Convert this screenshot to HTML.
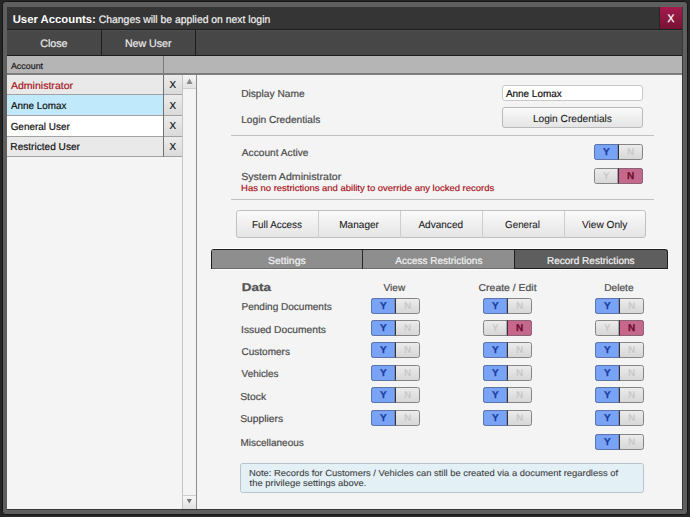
<!DOCTYPE html>
<html><head><meta charset="utf-8"><style>
html,body{margin:0;padding:0;width:690px;height:517px;overflow:hidden;background:#262626}
svg{display:block}
text{font-family:"Liberation Sans",sans-serif;text-rendering:geometricPrecision}
</style></head><body>
<svg width="690" height="517" viewBox="0 0 690 517">
<defs>
<linearGradient id="gClose" x1="0" y1="0" x2="0" y2="1"><stop offset="0" stop-color="#a51b4d"/><stop offset="1" stop-color="#761232"/></linearGradient>
<linearGradient id="gBtn" x1="0" y1="0" x2="0" y2="1"><stop offset="0" stop-color="#fbfbfb"/><stop offset="1" stop-color="#e4e4e4"/></linearGradient>
<linearGradient id="gX" x1="0" y1="0" x2="0" y2="1"><stop offset="0" stop-color="#ececec"/><stop offset="1" stop-color="#dadada"/></linearGradient>
<linearGradient id="gOff" x1="0" y1="0" x2="0" y2="1"><stop offset="0" stop-color="#ececec"/><stop offset="1" stop-color="#d6d6d6"/></linearGradient>
<linearGradient id="gScr" x1="0" y1="0" x2="0" y2="1"><stop offset="0" stop-color="#f6f6f6"/><stop offset="1" stop-color="#e2e2e2"/></linearGradient>
<clipPath id="cFrame"><rect x="7" y="7" width="675" height="502"/></clipPath>
</defs>
<rect x="0" y="0" width="690" height="517" fill="#262626" />
<rect x="2.5" y="1.5" width="685" height="513" fill="#5f5f5f" stroke="#151515" stroke-width="1" rx="3" />
<rect x="7" y="7" width="675" height="502" fill="#f4f4f4" />
<rect x="7" y="7" width="675" height="22" fill="#353535" />
<rect x="659" y="7" width="1" height="22" fill="#262626"/>
<rect x="660" y="7" width="22" height="22" fill="url(#gClose)" />
<text x="667.4" y="22" font-size="10.8" fill="#ffffff" textLength="6.8" lengthAdjust="spacingAndGlyphs" stroke="#ffffff" stroke-width="0.3">X</text>
<rect x="7" y="29" width="675" height="1" fill="#1d1d1d"/>
<rect x="7" y="30" width="675" height="25" fill="#474747" />
<rect x="7" y="30" width="675" height="1" fill="#505050"/>
<rect x="7" y="55" width="675" height="1" fill="#1d1d1d"/>
<rect x="101" y="30" width="1" height="25" fill="#1d1d1d"/>
<rect x="195" y="30" width="1" height="25" fill="#1d1d1d"/>
<rect x="7" y="56" width="675" height="17" fill="#b5b5b5" />
<rect x="7" y="73" width="675" height="1" fill="#7c7c7c"/>
<rect x="7" y="74" width="675" height="1" fill="#7e7e7e"/>
<rect x="163" y="56" width="1" height="17" fill="#7a7a7a"/>
<rect x="7" y="75" width="156" height="19" fill="#e9e9e9" />
<rect x="7" y="94" width="176" height="1" fill="#a2a2a2"/>
<rect x="164" y="75" width="18" height="19" fill="url(#gX)" />
<rect x="7" y="95" width="156" height="20" fill="#c0eafb" />
<rect x="7" y="115" width="176" height="1" fill="#a2a2a2"/>
<rect x="164" y="95" width="18" height="20" fill="url(#gX)" />
<rect x="7" y="116" width="156" height="20" fill="#ffffff" />
<rect x="7" y="136" width="176" height="1" fill="#a2a2a2"/>
<rect x="164" y="116" width="18" height="20" fill="url(#gX)" />
<rect x="7" y="137" width="156" height="19" fill="#e9e9e9" />
<rect x="7" y="156" width="176" height="1" fill="#a2a2a2"/>
<rect x="164" y="137" width="18" height="19" fill="url(#gX)" />
<rect x="163" y="75" width="1" height="82" fill="#707070"/>
<rect x="182" y="75" width="1" height="434" fill="#c4c4c4"/>
<rect x="196" y="75" width="1" height="434" fill="#8e8e8e"/>
<rect x="183" y="75" width="13" height="13" fill="url(#gScr)" />
<rect x="183" y="88" width="13" height="1" fill="#cfcfcf"/>
<path d="M186.5 84 L189.5 78.5 L192.5 84 Z" fill="#8a8a8a"/>
<rect x="183" y="495" width="13" height="1" fill="#cfcfcf"/>
<rect x="183" y="496" width="13" height="13" fill="url(#gScr)" />
<path d="M186.7 499 L189.3 503.5 L191.9 499 Z" fill="#777777"/>
<rect x="502.5" y="85.5" width="140" height="15" fill="#ffffff" stroke="#c8c8c8" stroke-width="1" rx="2.5" />
<rect x="502.5" y="107.5" width="140" height="20" fill="url(#gBtn)" stroke="#b9b9b9" stroke-width="1" rx="2.5" />
<rect x="231" y="135" width="423" height="1" fill="#c2c2c2"/>
<rect x="231" y="199" width="423" height="1" fill="#c2c2c2"/>
<rect x="594.5" y="144.5" width="48" height="15" fill="url(#gOff)" stroke="#858585" stroke-width="1" rx="2" />
<path d="M594.5 146.5 a2 2 0 0 1 2 -2 H618 V159.5 H596.5 a2 2 0 0 1 -2 -2 Z" fill="#79a4f6" stroke="#5d74a6" stroke-width="1"/>
<rect x="618" y="144.5" width="1" height="15.0" fill="#333333"/>
<text x="606.4" y="155.4" font-size="10" fill="#1d3c9e" font-weight="bold" text-anchor="middle" stroke="#1d3c9e" stroke-width="0.25">Y</text>
<text x="630.5" y="155.4" font-size="10" fill="#c9c9c9" font-weight="bold" text-anchor="middle" >N</text>
<rect x="594.5" y="168.5" width="48" height="15" fill="url(#gOff)" stroke="#858585" stroke-width="1" rx="2" />
<path d="M618 168.5 H640.5 a2 2 0 0 1 2 2 V181.5 a2 2 0 0 1 -2 2 H618 Z" fill="#c6688b" stroke="#8a6374" stroke-width="1"/>
<rect x="618" y="168.5" width="1" height="15.0" fill="#333333"/>
<text x="606.4" y="179.4" font-size="10" fill="#c9c9c9" font-weight="bold" text-anchor="middle" >Y</text>
<text x="630.5" y="179.4" font-size="10" fill="#6a0f33" font-weight="bold" text-anchor="middle" stroke="#6a0f33" stroke-width="0.25">N</text>
<rect x="236.5" y="210.5" width="409" height="27" fill="url(#gBtn)" stroke="#c0c0c0" stroke-width="1" rx="2.5" />
<rect x="318" y="211" width="1" height="27" fill="#cdcdcd"/>
<rect x="400" y="211" width="1" height="27" fill="#cdcdcd"/>
<rect x="482" y="211" width="1" height="27" fill="#cdcdcd"/>
<rect x="564" y="211" width="1" height="27" fill="#cdcdcd"/>
<rect x="213" y="248" width="453" height="1" fill="#fdfdfd"/>
<rect x="211" y="269" width="457" height="1" fill="#fdfdfd"/>
<path d="M211 269 V252 a3 3 0 0 1 3 -3 H665 a3 3 0 0 1 3 3 V269 Z" fill="#1e1e1e"/>
<rect x="212" y="250" width="302" height="18" fill="#8e8e8e" />
<rect x="212" y="268" width="302" height="1" fill="#6b6b6b"/>
<path d="M515 250 H665 a2 2 0 0 1 2 2 V268 H515 Z" fill="#5e5e5e"/>
<rect x="362" y="250" width="1" height="19" fill="#262626"/>
<rect x="514" y="250" width="1" height="19" fill="#1e1e1e"/>
<rect x="371.5" y="298.5" width="48" height="15" fill="url(#gOff)" stroke="#858585" stroke-width="1" rx="2" />
<path d="M371.5 300.5 a2 2 0 0 1 2 -2 H395 V313.5 H373.5 a2 2 0 0 1 -2 -2 Z" fill="#79a4f6" stroke="#5d74a6" stroke-width="1"/>
<rect x="395" y="298.5" width="1" height="15.0" fill="#333333"/>
<text x="383.4" y="309.4" font-size="10" fill="#1d3c9e" font-weight="bold" text-anchor="middle" stroke="#1d3c9e" stroke-width="0.25">Y</text>
<text x="407.5" y="309.4" font-size="10" fill="#c9c9c9" font-weight="bold" text-anchor="middle" >N</text>
<rect x="483.5" y="298.5" width="48" height="15" fill="url(#gOff)" stroke="#858585" stroke-width="1" rx="2" />
<path d="M483.5 300.5 a2 2 0 0 1 2 -2 H507 V313.5 H485.5 a2 2 0 0 1 -2 -2 Z" fill="#79a4f6" stroke="#5d74a6" stroke-width="1"/>
<rect x="507" y="298.5" width="1" height="15.0" fill="#333333"/>
<text x="495.4" y="309.4" font-size="10" fill="#1d3c9e" font-weight="bold" text-anchor="middle" stroke="#1d3c9e" stroke-width="0.25">Y</text>
<text x="519.5" y="309.4" font-size="10" fill="#c9c9c9" font-weight="bold" text-anchor="middle" >N</text>
<rect x="595.5" y="298.5" width="48" height="15" fill="url(#gOff)" stroke="#858585" stroke-width="1" rx="2" />
<path d="M595.5 300.5 a2 2 0 0 1 2 -2 H619 V313.5 H597.5 a2 2 0 0 1 -2 -2 Z" fill="#79a4f6" stroke="#5d74a6" stroke-width="1"/>
<rect x="619" y="298.5" width="1" height="15.0" fill="#333333"/>
<text x="607.4" y="309.4" font-size="10" fill="#1d3c9e" font-weight="bold" text-anchor="middle" stroke="#1d3c9e" stroke-width="0.25">Y</text>
<text x="631.5" y="309.4" font-size="10" fill="#c9c9c9" font-weight="bold" text-anchor="middle" >N</text>
<rect x="371.5" y="320.5" width="48" height="15" fill="url(#gOff)" stroke="#858585" stroke-width="1" rx="2" />
<path d="M371.5 322.5 a2 2 0 0 1 2 -2 H395 V335.5 H373.5 a2 2 0 0 1 -2 -2 Z" fill="#79a4f6" stroke="#5d74a6" stroke-width="1"/>
<rect x="395" y="320.5" width="1" height="15.0" fill="#333333"/>
<text x="383.4" y="331.4" font-size="10" fill="#1d3c9e" font-weight="bold" text-anchor="middle" stroke="#1d3c9e" stroke-width="0.25">Y</text>
<text x="407.5" y="331.4" font-size="10" fill="#c9c9c9" font-weight="bold" text-anchor="middle" >N</text>
<rect x="483.5" y="320.5" width="48" height="15" fill="url(#gOff)" stroke="#858585" stroke-width="1" rx="2" />
<path d="M507 320.5 H529.5 a2 2 0 0 1 2 2 V333.5 a2 2 0 0 1 -2 2 H507 Z" fill="#c6688b" stroke="#8a6374" stroke-width="1"/>
<rect x="507" y="320.5" width="1" height="15.0" fill="#333333"/>
<text x="495.4" y="331.4" font-size="10" fill="#c9c9c9" font-weight="bold" text-anchor="middle" >Y</text>
<text x="519.5" y="331.4" font-size="10" fill="#6a0f33" font-weight="bold" text-anchor="middle" stroke="#6a0f33" stroke-width="0.25">N</text>
<rect x="595.5" y="320.5" width="48" height="15" fill="url(#gOff)" stroke="#858585" stroke-width="1" rx="2" />
<path d="M619 320.5 H641.5 a2 2 0 0 1 2 2 V333.5 a2 2 0 0 1 -2 2 H619 Z" fill="#c6688b" stroke="#8a6374" stroke-width="1"/>
<rect x="619" y="320.5" width="1" height="15.0" fill="#333333"/>
<text x="607.4" y="331.4" font-size="10" fill="#c9c9c9" font-weight="bold" text-anchor="middle" >Y</text>
<text x="631.5" y="331.4" font-size="10" fill="#6a0f33" font-weight="bold" text-anchor="middle" stroke="#6a0f33" stroke-width="0.25">N</text>
<rect x="371.5" y="342.5" width="48" height="15" fill="url(#gOff)" stroke="#858585" stroke-width="1" rx="2" />
<path d="M371.5 344.5 a2 2 0 0 1 2 -2 H395 V357.5 H373.5 a2 2 0 0 1 -2 -2 Z" fill="#79a4f6" stroke="#5d74a6" stroke-width="1"/>
<rect x="395" y="342.5" width="1" height="15.0" fill="#333333"/>
<text x="383.4" y="353.4" font-size="10" fill="#1d3c9e" font-weight="bold" text-anchor="middle" stroke="#1d3c9e" stroke-width="0.25">Y</text>
<text x="407.5" y="353.4" font-size="10" fill="#c9c9c9" font-weight="bold" text-anchor="middle" >N</text>
<rect x="483.5" y="342.5" width="48" height="15" fill="url(#gOff)" stroke="#858585" stroke-width="1" rx="2" />
<path d="M483.5 344.5 a2 2 0 0 1 2 -2 H507 V357.5 H485.5 a2 2 0 0 1 -2 -2 Z" fill="#79a4f6" stroke="#5d74a6" stroke-width="1"/>
<rect x="507" y="342.5" width="1" height="15.0" fill="#333333"/>
<text x="495.4" y="353.4" font-size="10" fill="#1d3c9e" font-weight="bold" text-anchor="middle" stroke="#1d3c9e" stroke-width="0.25">Y</text>
<text x="519.5" y="353.4" font-size="10" fill="#c9c9c9" font-weight="bold" text-anchor="middle" >N</text>
<rect x="595.5" y="342.5" width="48" height="15" fill="url(#gOff)" stroke="#858585" stroke-width="1" rx="2" />
<path d="M595.5 344.5 a2 2 0 0 1 2 -2 H619 V357.5 H597.5 a2 2 0 0 1 -2 -2 Z" fill="#79a4f6" stroke="#5d74a6" stroke-width="1"/>
<rect x="619" y="342.5" width="1" height="15.0" fill="#333333"/>
<text x="607.4" y="353.4" font-size="10" fill="#1d3c9e" font-weight="bold" text-anchor="middle" stroke="#1d3c9e" stroke-width="0.25">Y</text>
<text x="631.5" y="353.4" font-size="10" fill="#c9c9c9" font-weight="bold" text-anchor="middle" >N</text>
<rect x="371.5" y="365.5" width="48" height="15" fill="url(#gOff)" stroke="#858585" stroke-width="1" rx="2" />
<path d="M371.5 367.5 a2 2 0 0 1 2 -2 H395 V380.5 H373.5 a2 2 0 0 1 -2 -2 Z" fill="#79a4f6" stroke="#5d74a6" stroke-width="1"/>
<rect x="395" y="365.5" width="1" height="15.0" fill="#333333"/>
<text x="383.4" y="376.4" font-size="10" fill="#1d3c9e" font-weight="bold" text-anchor="middle" stroke="#1d3c9e" stroke-width="0.25">Y</text>
<text x="407.5" y="376.4" font-size="10" fill="#c9c9c9" font-weight="bold" text-anchor="middle" >N</text>
<rect x="483.5" y="365.5" width="48" height="15" fill="url(#gOff)" stroke="#858585" stroke-width="1" rx="2" />
<path d="M483.5 367.5 a2 2 0 0 1 2 -2 H507 V380.5 H485.5 a2 2 0 0 1 -2 -2 Z" fill="#79a4f6" stroke="#5d74a6" stroke-width="1"/>
<rect x="507" y="365.5" width="1" height="15.0" fill="#333333"/>
<text x="495.4" y="376.4" font-size="10" fill="#1d3c9e" font-weight="bold" text-anchor="middle" stroke="#1d3c9e" stroke-width="0.25">Y</text>
<text x="519.5" y="376.4" font-size="10" fill="#c9c9c9" font-weight="bold" text-anchor="middle" >N</text>
<rect x="595.5" y="365.5" width="48" height="15" fill="url(#gOff)" stroke="#858585" stroke-width="1" rx="2" />
<path d="M595.5 367.5 a2 2 0 0 1 2 -2 H619 V380.5 H597.5 a2 2 0 0 1 -2 -2 Z" fill="#79a4f6" stroke="#5d74a6" stroke-width="1"/>
<rect x="619" y="365.5" width="1" height="15.0" fill="#333333"/>
<text x="607.4" y="376.4" font-size="10" fill="#1d3c9e" font-weight="bold" text-anchor="middle" stroke="#1d3c9e" stroke-width="0.25">Y</text>
<text x="631.5" y="376.4" font-size="10" fill="#c9c9c9" font-weight="bold" text-anchor="middle" >N</text>
<rect x="371.5" y="387.5" width="48" height="15" fill="url(#gOff)" stroke="#858585" stroke-width="1" rx="2" />
<path d="M371.5 389.5 a2 2 0 0 1 2 -2 H395 V402.5 H373.5 a2 2 0 0 1 -2 -2 Z" fill="#79a4f6" stroke="#5d74a6" stroke-width="1"/>
<rect x="395" y="387.5" width="1" height="15.0" fill="#333333"/>
<text x="383.4" y="398.4" font-size="10" fill="#1d3c9e" font-weight="bold" text-anchor="middle" stroke="#1d3c9e" stroke-width="0.25">Y</text>
<text x="407.5" y="398.4" font-size="10" fill="#c9c9c9" font-weight="bold" text-anchor="middle" >N</text>
<rect x="483.5" y="387.5" width="48" height="15" fill="url(#gOff)" stroke="#858585" stroke-width="1" rx="2" />
<path d="M483.5 389.5 a2 2 0 0 1 2 -2 H507 V402.5 H485.5 a2 2 0 0 1 -2 -2 Z" fill="#79a4f6" stroke="#5d74a6" stroke-width="1"/>
<rect x="507" y="387.5" width="1" height="15.0" fill="#333333"/>
<text x="495.4" y="398.4" font-size="10" fill="#1d3c9e" font-weight="bold" text-anchor="middle" stroke="#1d3c9e" stroke-width="0.25">Y</text>
<text x="519.5" y="398.4" font-size="10" fill="#c9c9c9" font-weight="bold" text-anchor="middle" >N</text>
<rect x="595.5" y="387.5" width="48" height="15" fill="url(#gOff)" stroke="#858585" stroke-width="1" rx="2" />
<path d="M595.5 389.5 a2 2 0 0 1 2 -2 H619 V402.5 H597.5 a2 2 0 0 1 -2 -2 Z" fill="#79a4f6" stroke="#5d74a6" stroke-width="1"/>
<rect x="619" y="387.5" width="1" height="15.0" fill="#333333"/>
<text x="607.4" y="398.4" font-size="10" fill="#1d3c9e" font-weight="bold" text-anchor="middle" stroke="#1d3c9e" stroke-width="0.25">Y</text>
<text x="631.5" y="398.4" font-size="10" fill="#c9c9c9" font-weight="bold" text-anchor="middle" >N</text>
<rect x="371.5" y="410.5" width="48" height="15" fill="url(#gOff)" stroke="#858585" stroke-width="1" rx="2" />
<path d="M371.5 412.5 a2 2 0 0 1 2 -2 H395 V425.5 H373.5 a2 2 0 0 1 -2 -2 Z" fill="#79a4f6" stroke="#5d74a6" stroke-width="1"/>
<rect x="395" y="410.5" width="1" height="15.0" fill="#333333"/>
<text x="383.4" y="421.4" font-size="10" fill="#1d3c9e" font-weight="bold" text-anchor="middle" stroke="#1d3c9e" stroke-width="0.25">Y</text>
<text x="407.5" y="421.4" font-size="10" fill="#c9c9c9" font-weight="bold" text-anchor="middle" >N</text>
<rect x="483.5" y="410.5" width="48" height="15" fill="url(#gOff)" stroke="#858585" stroke-width="1" rx="2" />
<path d="M483.5 412.5 a2 2 0 0 1 2 -2 H507 V425.5 H485.5 a2 2 0 0 1 -2 -2 Z" fill="#79a4f6" stroke="#5d74a6" stroke-width="1"/>
<rect x="507" y="410.5" width="1" height="15.0" fill="#333333"/>
<text x="495.4" y="421.4" font-size="10" fill="#1d3c9e" font-weight="bold" text-anchor="middle" stroke="#1d3c9e" stroke-width="0.25">Y</text>
<text x="519.5" y="421.4" font-size="10" fill="#c9c9c9" font-weight="bold" text-anchor="middle" >N</text>
<rect x="595.5" y="410.5" width="48" height="15" fill="url(#gOff)" stroke="#858585" stroke-width="1" rx="2" />
<path d="M595.5 412.5 a2 2 0 0 1 2 -2 H619 V425.5 H597.5 a2 2 0 0 1 -2 -2 Z" fill="#79a4f6" stroke="#5d74a6" stroke-width="1"/>
<rect x="619" y="410.5" width="1" height="15.0" fill="#333333"/>
<text x="607.4" y="421.4" font-size="10" fill="#1d3c9e" font-weight="bold" text-anchor="middle" stroke="#1d3c9e" stroke-width="0.25">Y</text>
<text x="631.5" y="421.4" font-size="10" fill="#c9c9c9" font-weight="bold" text-anchor="middle" >N</text>
<rect x="595.5" y="434.5" width="48" height="15" fill="url(#gOff)" stroke="#858585" stroke-width="1" rx="2" />
<path d="M595.5 436.5 a2 2 0 0 1 2 -2 H619 V449.5 H597.5 a2 2 0 0 1 -2 -2 Z" fill="#79a4f6" stroke="#5d74a6" stroke-width="1"/>
<rect x="619" y="434.5" width="1" height="15.0" fill="#333333"/>
<text x="607.4" y="445.4" font-size="10" fill="#1d3c9e" font-weight="bold" text-anchor="middle" stroke="#1d3c9e" stroke-width="0.25">Y</text>
<text x="631.5" y="445.4" font-size="10" fill="#c9c9c9" font-weight="bold" text-anchor="middle" >N</text>
<rect x="240.5" y="463.5" width="403" height="29" fill="#e3f0f6" stroke="#b8c4c9" stroke-width="1" rx="2" />
<text x="12.70" y="23" font-size="11.2" font-weight="bold" textLength="83.20" lengthAdjust="spacingAndGlyphs" fill="#ffffff">User Accounts:</text>
<text x="98.79" y="23" font-size="10.8" textLength="171.46" lengthAdjust="spacingAndGlyphs" fill="#f0f0f0" stroke="#f0f0f0" stroke-width="0.2">Changes will be applied on next login</text>
<text x="40.13" y="47" font-size="10.8" textLength="27.47" lengthAdjust="spacingAndGlyphs" fill="#ececec" stroke="#ececec" stroke-width="0.2">Close</text>
<text x="124.89" y="47" font-size="10.8" textLength="46.66" lengthAdjust="spacingAndGlyphs" fill="#ececec" stroke="#ececec" stroke-width="0.2">New User</text>
<text x="10.94" y="69" font-size="8.8" textLength="32.16" lengthAdjust="spacingAndGlyphs" fill="#1a1a1a" stroke="#1a1a1a" stroke-width="0.2">Account</text>
<text x="10.94" y="89" font-size="10.2" textLength="62.11" lengthAdjust="spacingAndGlyphs" fill="#aa161e" stroke="#aa161e" stroke-width="0.2">Administrator</text>
<text x="10.97" y="109" font-size="10.2" textLength="55.58" lengthAdjust="spacingAndGlyphs" fill="#111111" stroke="#111111" stroke-width="0.2">Anne Lomax</text>
<text x="10.64" y="130" font-size="10.2" textLength="59.16" lengthAdjust="spacingAndGlyphs" fill="#111111" stroke="#111111" stroke-width="0.2">General User</text>
<text x="10.37" y="150" font-size="10.2" textLength="69.58" lengthAdjust="spacingAndGlyphs" fill="#111111" stroke="#111111" stroke-width="0.2">Restricted User</text>
<text x="169.44" y="88" font-size="10.2" textLength="6.51" lengthAdjust="spacingAndGlyphs" fill="#111111" stroke="#111111" stroke-width="0.2">X</text>
<text x="169.44" y="109" font-size="10.2" textLength="6.51" lengthAdjust="spacingAndGlyphs" fill="#111111" stroke="#111111" stroke-width="0.2">X</text>
<text x="169.44" y="129" font-size="10.2" textLength="6.51" lengthAdjust="spacingAndGlyphs" fill="#111111" stroke="#111111" stroke-width="0.2">X</text>
<text x="169.44" y="150" font-size="10.2" textLength="6.51" lengthAdjust="spacingAndGlyphs" fill="#111111" stroke="#111111" stroke-width="0.2">X</text>
<text x="241.15" y="97" font-size="10.2" textLength="63.45" lengthAdjust="spacingAndGlyphs" fill="#4c4c4c" stroke="#4c4c4c" stroke-width="0.2">Display Name</text>
<text x="241.15" y="123" font-size="10.2" textLength="79.25" lengthAdjust="spacingAndGlyphs" fill="#4c4c4c" stroke="#4c4c4c" stroke-width="0.2">Login Credentials</text>
<text x="241.84" y="156" font-size="10.2" textLength="66.71" lengthAdjust="spacingAndGlyphs" fill="#4c4c4c" stroke="#4c4c4c" stroke-width="0.2">Account Active</text>
<text x="241.19" y="180" font-size="10.2" textLength="100.06" lengthAdjust="spacingAndGlyphs" fill="#4c4c4c" stroke="#4c4c4c" stroke-width="0.2">System Administrator</text>
<text x="241.07" y="191" font-size="8.8" textLength="253.08" lengthAdjust="spacingAndGlyphs" fill="#aa161e" stroke="#aa161e" stroke-width="0.2">Has no restrictions and ability to override any locked records</text>
<text x="505.89" y="97" font-size="10.2" textLength="55.86" lengthAdjust="spacingAndGlyphs" fill="#111111" stroke="#111111" stroke-width="0.2">Anne Lomax</text>
<text x="532.89" y="122" font-size="10.2" textLength="79.06" lengthAdjust="spacingAndGlyphs" fill="#1a1a1a" stroke="#1a1a1a" stroke-width="0.08">Login Credentials</text>
<text x="252.07" y="228" font-size="10.2" textLength="49.88" lengthAdjust="spacingAndGlyphs" fill="#1a1a1a" stroke="#1a1a1a" stroke-width="0.08">Full Access</text>
<text x="339.15" y="228" font-size="10.2" textLength="39.85" lengthAdjust="spacingAndGlyphs" fill="#1a1a1a" stroke="#1a1a1a" stroke-width="0.08">Manager</text>
<text x="418.43" y="228" font-size="10.2" textLength="44.62" lengthAdjust="spacingAndGlyphs" fill="#1a1a1a" stroke="#1a1a1a" stroke-width="0.08">Advanced</text>
<text x="505.07" y="228" font-size="10.2" textLength="34.88" lengthAdjust="spacingAndGlyphs" fill="#1a1a1a" stroke="#1a1a1a" stroke-width="0.08">General</text>
<text x="582.07" y="228" font-size="10.2" textLength="45.33" lengthAdjust="spacingAndGlyphs" fill="#1a1a1a" stroke="#1a1a1a" stroke-width="0.08">View Only</text>
<text x="267.95" y="264" font-size="10.2" textLength="37.80" lengthAdjust="spacingAndGlyphs" fill="#f2f2f2" stroke="#f2f2f2" stroke-width="0.2">Settings</text>
<text x="395.29" y="264" font-size="10.2" textLength="87.11" lengthAdjust="spacingAndGlyphs" fill="#f2f2f2" stroke="#f2f2f2" stroke-width="0.2">Access Restrictions</text>
<text x="546.92" y="264" font-size="10.2" textLength="87.68" lengthAdjust="spacingAndGlyphs" fill="#f2f2f2" stroke="#f2f2f2" stroke-width="0.2">Record Restrictions</text>
<text x="241.87" y="291" font-size="11.2" font-weight="bold" textLength="29.28" lengthAdjust="spacingAndGlyphs" fill="#555555" stroke="#555555" stroke-width="0.25">Data</text>
<text x="383.61" y="291" font-size="10.0" textLength="21.54" lengthAdjust="spacingAndGlyphs" fill="#4c4c4c" stroke="#4c4c4c" stroke-width="0.2">View</text>
<text x="478.60" y="291" font-size="10.0" textLength="57.95" lengthAdjust="spacingAndGlyphs" fill="#4c4c4c" stroke="#4c4c4c" stroke-width="0.2">Create / Edit</text>
<text x="604.23" y="291" font-size="10.0" textLength="29.37" lengthAdjust="spacingAndGlyphs" fill="#4c4c4c" stroke="#4c4c4c" stroke-width="0.2">Delete</text>
<text x="241.49" y="310" font-size="10.0" textLength="90.26" lengthAdjust="spacingAndGlyphs" fill="#4c4c4c" stroke="#4c4c4c" stroke-width="0.2">Pending Documents</text>
<text x="241.10" y="333" font-size="10.0" textLength="84.85" lengthAdjust="spacingAndGlyphs" fill="#4c4c4c" stroke="#4c4c4c" stroke-width="0.2">Issued Documents</text>
<text x="241.52" y="355" font-size="10.0" textLength="48.43" lengthAdjust="spacingAndGlyphs" fill="#4c4c4c" stroke="#4c4c4c" stroke-width="0.2">Customers</text>
<text x="241.61" y="377" font-size="10.0" textLength="36.89" lengthAdjust="spacingAndGlyphs" fill="#4c4c4c" stroke="#4c4c4c" stroke-width="0.2">Vehicles</text>
<text x="240.19" y="400" font-size="10.0" textLength="25.96" lengthAdjust="spacingAndGlyphs" fill="#4c4c4c" stroke="#4c4c4c" stroke-width="0.2">Stock</text>
<text x="240.20" y="422" font-size="10.0" textLength="42.95" lengthAdjust="spacingAndGlyphs" fill="#4c4c4c" stroke="#4c4c4c" stroke-width="0.2">Suppliers</text>
<text x="240.49" y="446" font-size="10.0" textLength="63.31" lengthAdjust="spacingAndGlyphs" fill="#4c4c4c" stroke="#4c4c4c" stroke-width="0.2">Miscellaneous</text>
<text x="248.97" y="476" font-size="8.8" textLength="369.08" lengthAdjust="spacingAndGlyphs" fill="#404040" stroke="#404040" stroke-width="0.1">Note: Records for Customers / Vehicles can still be created via a document regardless of</text>
<text x="249.55" y="486" font-size="8.8" textLength="116.85" lengthAdjust="spacingAndGlyphs" fill="#404040" stroke="#404040" stroke-width="0.1">the privilege settings above.</text>
<rect x="7" y="509" width="675" height="1" fill="#3a3a3a"/>
<rect x="682" y="7" width="1" height="503" fill="#3a3a3a"/>
</svg>
</body></html>
